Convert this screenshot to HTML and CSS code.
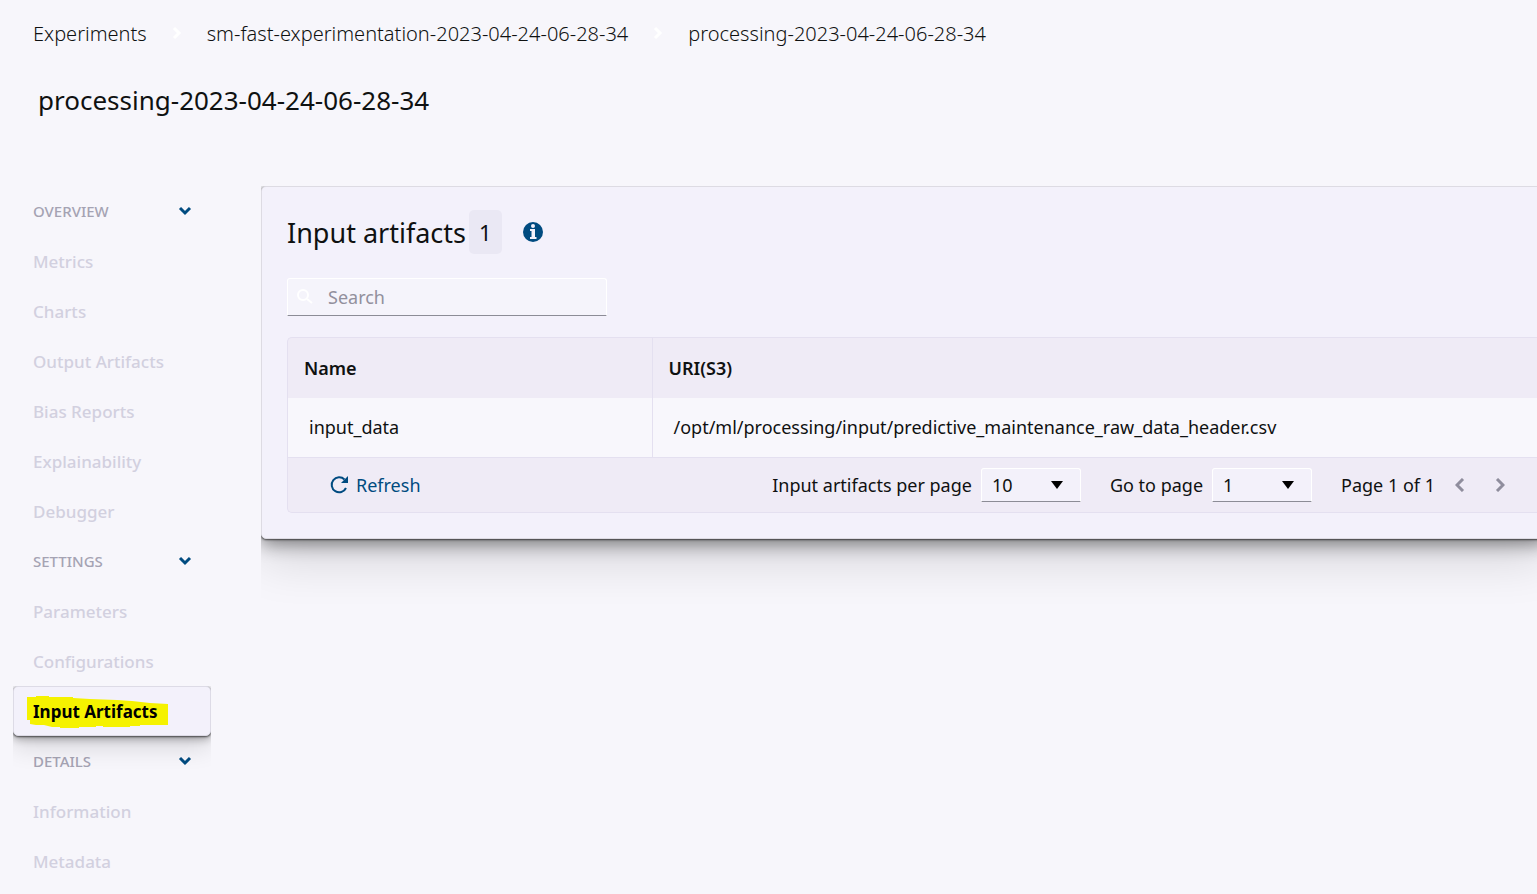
FILE: index.html
```html
<!DOCTYPE html>
<html lang="en">

<head>
  <meta charset="UTF-8">
  <title>Input artifacts</title>
  <link rel="stylesheet" href="styles.css">
</head>

<body>

  <nav class="breadcrumb" aria-label="Breadcrumb">
    <a href="#">Experiments</a>
    <svg class="crumb-sep" viewBox="0 0 10 14"><path d="M2 2l5 5-5 5"/></svg>
    <a href="#">sm-fast-experimentation-2023-04-24-06-28-34</a>
    <svg class="crumb-sep" viewBox="0 0 10 14"><path d="M2 2l5 5-5 5"/></svg>
    <a href="#">processing-2023-04-24-06-28-34</a>
  </nav>

  <h1>processing-2023-04-24-06-28-34</h1>

  <div class="layout">
    <nav class="sidebar" aria-label="Sections">
      <button class="group" type="button">OVERVIEW
        <svg class="chevron" viewBox="0 0 14 10"><path d="M2 2l5 5 5-5"/></svg>
      </button>
      <a class="item" href="#">Metrics</a>
      <a class="item" href="#">Charts</a>
      <a class="item" href="#">Output Artifacts</a>
      <a class="item" href="#">Bias Reports</a>
      <a class="item" href="#">Explainability</a>
      <a class="item" href="#">Debugger</a>
      <button class="group" type="button">SETTINGS
        <svg class="chevron" viewBox="0 0 14 10"><path d="M2 2l5 5 5-5"/></svg>
      </button>
      <a class="item" href="#">Parameters</a>
      <a class="item" href="#">Configurations</a>
      <a class="item active" href="#">
        <svg class="marker" viewBox="0 0 142 32"><path d="M0 1h9V0h13v1h24v1l17 1 27 1 15 1 18 2 18 1v21h-28v1h-10v1H76v-1h-7v1H52v1H33v-1h-8l-8-2H9l-6-1v-4H0z"/></svg>
        <span>Input Artifacts</span>
      </a>
      <button class="group" type="button">DETAILS
        <svg class="chevron" viewBox="0 0 14 10"><path d="M2 2l5 5 5-5"/></svg>
      </button>
      <a class="item" href="#">Information</a>
      <a class="item" href="#">Metadata</a>
    </nav>

    <main class="panel">
      <div class="panel-header">
        <h2>Input artifacts</h2>
        <span class="count">1</span>
        <svg class="info" viewBox="0 0 20 20">
          <circle cx="10" cy="10" r="10" fill="#004b80"/>
          <circle cx="10" cy="4" r="2" fill="#f3f1fb"/>
          <path d="M7 7h5v8h1.500v2H7v-2h1.500V9H7z" fill="#f3f1fb"/>
        </svg>
      </div>

      <div class="search">
        <svg class="search-icon" viewBox="0 0 18 18"><circle cx="7" cy="7" r="5"/><path d="M11 11l5 4"/></svg>
        <input type="text" id="search" placeholder="Search" aria-label="Search">
      </div>

      <div class="table-box">
        <table>
          <thead>
            <tr>
              <th class="col-name">Name</th>
              <th>URI(S3)</th>
            </tr>
          </thead>
          <tbody>
            <tr>
              <td>input_data</td>
              <td>/opt/ml/processing/input/predictive_maintenance_raw_data_header.csv</td>
            </tr>
          </tbody>
        </table>

        <div class="table-footer">
          <button class="refresh" type="button">
            <svg class="refresh-icon" viewBox="0 0 20 20">
              <path d="M15.500 4.500A7.500 7.500 0 1 0 17 13" fill="none" stroke="#004b80" stroke-width="2"/>
              <path d="M19 1v7h-7z" fill="#004b80"/>
            </svg>
            Refresh
          </button>

          <div class="pager">
            <label for="perPage">Input artifacts per page</label>
            <div class="select">
              <select id="perPage">
                <option>10</option>
                <option>25</option>
                <option>50</option>
              </select>
              <svg class="caret" viewBox="0 0 12 8"><path d="M0 0h12L6 8z"/></svg>
            </div>
            <label for="goPage">Go to page</label>
            <div class="select">
              <select id="goPage">
                <option>1</option>
              </select>
              <svg class="caret" viewBox="0 0 12 8"><path d="M0 0h12L6 8z"/></svg>
            </div>
            <span class="page-status">Page 1 of 1</span>
            <button class="arrow" type="button" aria-label="Previous page">
              <svg viewBox="0 0 10 14"><path d="M8 1L2 7l6 6"/></svg>
            </button>
            <button class="arrow" type="button" aria-label="Next page">
              <svg viewBox="0 0 10 14"><path d="M2 1l6 6-6 6"/></svg>
            </button>
          </div>
        </div>
      </div>
    </main>
  </div>

</body>

</html>
```

FILE: styles.css
```css
* {
  box-sizing: border-box;
}

body {
  margin: 0;
  background: #f7f6fb;
  color: #0f1111;
  font-family: "Noto Sans", "Open Sans", sans-serif;
  font-size: 18px;
  overflow-x: hidden;
}

a {
  color: inherit;
  text-decoration: none;
}

button,
input,
select {
  font: inherit;
  color: inherit;
}

button {
  background: none;
  border: none;
  padding: 0;
  cursor: pointer;
}

.breadcrumb {
  display: flex;
  align-items: center;
  height: 66px;
  padding-left: 33px;
  font-size: 20px;
  font-weight: 300;
}

.crumb-sep {
  width: 10px;
  height: 14px;
  margin: 0 25px;
  fill: none;
  stroke: #fff;
  stroke-width: 3;
}

h1 {
  margin: 0;
  padding-left: 38px;
  font-size: 26px;
  font-weight: 400;
  line-height: 68px;
}

.layout {
  display: flex;
  gap: 50px;
  padding: 52px 0 8px 13px;
}

.sidebar {
  flex: 0 0 198px;
}

.group,
.item {
  display: flex;
  align-items: center;
  width: 100%;
  height: 50px;
  padding: 0 19px 0 20px;
  font-weight: 500;
}

.group {
  justify-content: space-between;
  color: #a5a3b3;
  font-size: 15px;
}

.item {
  color: #d2d0df;
  font-size: 17px;
}

.chevron {
  width: 14px;
  height: 10px;
  fill: none;
  stroke: #004b80;
  stroke-width: 3;
}

.item.active {
  position: relative;
  background: #f3f1fb;
  border: 1px solid #dddbe6;
  border-radius: 5px;
  padding: 0 19px;
  color: #000;
  font-weight: 700;
  box-shadow: 0 1px 2px rgba(0, 0, 0, 0.6), 0 3px 8px rgba(0, 0, 0, 0.3), 0 10px 26px rgba(0, 0, 0, 0.14);
  clip-path: inset(0 0 -40px 0);
}

.item.active span {
  position: relative;
}

/* highlighter stroke behind the current page */
.marker {
  position: absolute;
  left: 13px;
  top: 9px;
  width: 142px;
  height: 32px;
  fill: #f5f200;
}

/* the panel runs past the right edge of the window */
.panel {
  flex: 1;
  min-width: 0;
  align-self: flex-start;
  margin-right: -10px;
  padding: 23px 0 25px 25px;
  background: #f3f1fb;
  border: 1px solid #dddbe3;
  border-radius: 5px;
  box-shadow: 0 1px 2px rgba(0, 0, 0, 0.6), 0 5px 18px rgba(0, 0, 0, 0.45), 0 20px 50px rgba(0, 0, 0, 0.14);
  clip-path: inset(0 0 -80px 0);
}

.panel-header {
  display: flex;
  align-items: center;
  height: 44px;
}

h2 {
  margin: 0;
  font-size: 27px;
  font-weight: 400;
}

.count {
  margin-left: 3px;
  padding: 0 10px;
  background: #eae8f4;
  border-radius: 5px;
  font-size: 22px;
  line-height: 44px;
}

.info {
  width: 20px;
  height: 20px;
  margin-left: 21px;
}

.search {
  display: flex;
  align-items: center;
  width: 320px;
  height: 38px;
  margin: 24px 0 21px;
  padding-left: 8px;
  background: #f5f4fb;
  border: 1px solid #fff;
  border-bottom-color: #8c8c96;
  border-radius: 3px 3px 0 0;
}

.search-icon {
  flex: none;
  width: 18px;
  height: 18px;
  fill: none;
  stroke: #fff;
  stroke-width: 2;
}

.search input {
  flex: 1;
  min-width: 0;
  height: 100%;
  padding: 0 14px;
  border: none;
  outline: none;
  background: none;
}

.search input::placeholder {
  color: #92909d;
}

.table-box {
  overflow: hidden;
  background: #efebf6;
  border: 1px solid #e4e0f0;
  border-right: none;
  border-radius: 5px 0 0 5px;
}

table {
  width: 100%;
  border-collapse: collapse;
}

th,
td {
  height: 60px;
  padding: 0 16px;
  text-align: left;
}

th {
  font-weight: 600;
}

td {
  height: 59px;
  padding: 0 21px;
  background: #f8f7fc;
  border-bottom: 1px solid #e4e0f0;
}

th + th,
td + td {
  border-left: 1px solid #e4e0f0;
}

.col-name {
  width: 364px;
}

.table-footer {
  display: flex;
  align-items: center;
  justify-content: space-between;
  height: 54px;
  padding: 0 41px;
}

.refresh {
  display: flex;
  align-items: center;
  gap: 7px;
  color: #004b80;
}

.refresh-icon {
  width: 20px;
  height: 20px;
}

.pager {
  display: flex;
  align-items: center;
}

.select {
  position: relative;
  margin: 0 29px 0 9px;
}

.select select {
  display: block;
  width: 100px;
  height: 34px;
  padding: 0 10px;
  appearance: none;
  background: #f3f1fa;
  border: 1px solid #fff;
  border-bottom-color: #8c8c96;
  border-radius: 3px 3px 0 0;
}

.caret {
  position: absolute;
  right: 18px;
  top: 13px;
  width: 12px;
  height: 8px;
  pointer-events: none;
}

.page-status {
  margin-right: 20px;
}

.arrow {
  display: flex;
  padding: 5px 0;
}

.arrow + .arrow {
  margin-left: 30px;
}

.arrow svg {
  width: 10px;
  height: 14px;
  fill: none;
  stroke: #8f8d9d;
  stroke-width: 3;
}
```
